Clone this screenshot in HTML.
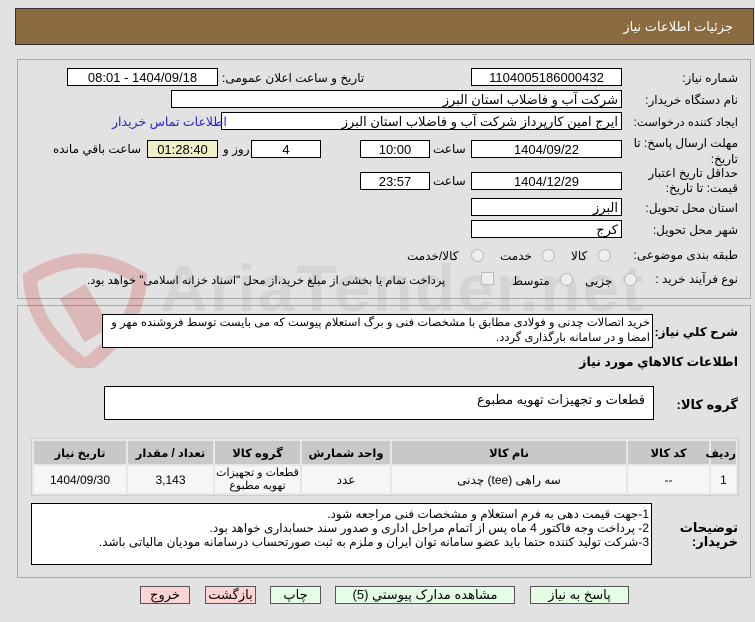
<!DOCTYPE html>
<html><head><meta charset="utf-8"><style>
body{margin:0;width:755px;height:622px;background:#e2e2e2;font-family:"Liberation Sans","DejaVu Sans",sans-serif;font-size:12px;color:#000;position:relative;overflow:hidden}
.a{position:absolute}
.hdr{left:15px;top:8px;width:737px;height:35px;background:#8b6b40;border:1px solid #333}
.hdr span{position:absolute;right:20px;top:10px;color:#fff;font-size:13px}
.pan{left:17px;width:732px;border:1px solid #aaa}
.box{position:absolute;background:#fff;border:1px solid #000;box-sizing:border-box;direction:rtl;padding:2px 3px;font-size:13px;white-space:nowrap;overflow:hidden}
.c{text-align:center}
.l{position:absolute;direction:rtl;white-space:nowrap;font-size:12px}
.rad{position:absolute;width:11px;height:11px;border-radius:50%;border:1px solid #bbb;background:#eee}
table{border-collapse:separate;border-spacing:2px;position:absolute;left:31px;top:438px;width:708px;background:#e6e6e6;border:1px solid #ccc;table-layout:fixed}
th{background:#c8c8c8;height:23px;font-size:11.5px;padding:0}
td{background:#f6f6f6;height:27px;text-align:center;font-size:12px;padding:0}
.btn{position:absolute;top:586px;height:18px;border:1px solid #555;box-sizing:border-box;text-align:center;font-size:13px;line-height:16px}
.g{background:#e4fde4}.p{background:#fdd4d4}
</style></head><body>
<div class="a hdr"><span>جزئیات اطلاعات نیاز</span></div>
<div class="a pan" style="top:59px;height:238px"></div>
<div class="a pan" style="top:305px;height:271px"></div>
<svg class="a" style="left:20px;top:248px;opacity:.18" width="130" height="120" viewBox="0 0 130 120"><path d="M10 30 Q65 -5 120 30 Q118 80 65 118 Q12 80 10 30Z" fill="none" stroke="#c00" stroke-width="14"/><rect x="50" y="40" width="30" height="50" fill="#c00" transform="rotate(-30 65 65)"/></svg>
<div class="a" style="left:160px;top:250px;font-size:66px;font-weight:bold;color:#999;opacity:.18;letter-spacing:2px">AriaTender.net</div>

<div class="l" style="right:17px;top:71px">شماره نیاز:</div>
<div class="box c" style="left:471px;top:68px;width:151px;height:18px;padding:1px">1104005186000432</div>
<div class="l" style="left:222px;top:71px">تاریخ و ساعت اعلان عمومی:</div>
<div class="box c" style="left:67px;top:68px;width:151px;height:18px;padding:1px">1404/09/18 - 08:01</div>
<div class="l" style="right:17px;top:93px">نام دستگاه خریدار:</div>
<div class="box" style="left:171px;top:90px;width:451px;height:18px;padding:1px 3px">شرکت آب و فاضلاب استان البرز</div>
<div class="l" style="right:17px;top:115px;font-size:11.5px">ایجاد کننده درخواست:</div>
<div class="box" style="left:221px;top:112px;width:401px;height:18px;padding:1px 3px">ایرج امین کارپرداز شرکت آب و فاضلاب استان البرز</div>
<div class="l" style="left:112px;top:114px;color:#2222dd;font-size:12.5px">اطلاعات تماس خریدار</div>
<div class="l" style="right:17px;top:135px;line-height:16px;text-align:right">مهلت ارسال پاسخ: تا<br>تاریخ:</div>
<div class="box c" style="left:471px;top:140px;width:151px;height:18px;padding:1px">1404/09/22</div>
<div class="l" style="left:433px;top:142px">ساعت</div>
<div class="box c" style="left:360px;top:140px;width:70px;height:18px;padding:1px">10:00</div>
<div class="box c" style="left:251px;top:140px;width:70px;height:18px;padding:1px">4</div>
<div class="l" style="left:223px;top:142px">روز و</div>
<div class="box c" style="left:147px;top:140px;width:71px;height:18px;padding:1px;background:#f0f0c8">01:28:40</div>
<div class="l" style="left:53px;top:142px">ساعت باقي مانده</div>
<div class="l" style="right:17px;top:166px;line-height:15px;text-align:right">حداقل تاریخ اعتبار<br>قیمت: تا تاریخ:</div>
<div class="box c" style="left:471px;top:172px;width:151px;height:18px;padding:1px">1404/12/29</div>
<div class="l" style="left:433px;top:174px">ساعت</div>
<div class="box c" style="left:360px;top:172px;width:70px;height:18px;padding:1px">23:57</div>
<div class="l" style="right:17px;top:201px">استان محل تحویل:</div>
<div class="box" style="left:471px;top:198px;width:151px;height:18px;padding:1px 3px">البرز</div>
<div class="l" style="right:17px;top:223px">شهر محل تحویل:</div>
<div class="box" style="left:471px;top:220px;width:151px;height:18px;padding:1px 3px">کرج</div>
<div class="l" style="right:17px;top:248px">طبقه بندی موضوعی:</div>
<div class="rad" style="left:598px;top:249px"></div><div class="l" style="left:571px;top:249px">کالا</div>
<div class="rad" style="left:542px;top:249px"></div><div class="l" style="left:500px;top:249px">خدمت</div>
<div class="rad" style="left:471px;top:249px"></div><div class="l" style="left:407px;top:249px">کالا/خدمت</div>
<div class="l" style="right:17px;top:272px">نوع فرآیند خرید :</div>
<div class="rad" style="left:624px;top:273px"></div><div class="l" style="left:585px;top:274px">جزیی</div>
<div class="rad" style="left:560px;top:273px"></div><div class="l" style="left:512px;top:274px">متوسط</div>
<div class="a" style="left:481px;top:272px;width:11px;height:11px;border:1px solid #bbb;background:#eee"></div>
<div class="l" style="left:87px;top:273px;font-size:11.5px">پرداخت تمام یا بخشی از مبلغ خرید،از محل "اسناد خزانه اسلامی" خواهد بود.</div>

<div class="l" style="right:17px;top:325px;font-weight:bold;font-size:12px">شرح کلي نياز:</div>
<div class="box" style="left:102px;top:314px;width:551px;height:34px;white-space:normal;line-height:15px;padding:1px 2px;font-size:11.5px;letter-spacing:-0.2px">خرید اتصالات چدنی و فولادی مطابق با مشخصات فنی و برگ استعلام پیوست که می بایست توسط فروشنده مهر و امضا و در سامانه بارگذاری گردد.</div>
<div class="l" style="right:17px;top:354px;font-weight:bold;font-size:12.5px">اطلاعات کالاهاي مورد نياز</div>
<div class="l" style="right:17px;top:397px;font-weight:bold;font-size:13px">گروه کالا:</div>
<div class="box" style="left:104px;top:386px;width:550px;height:34px;padding:5px 8px">قطعات و تجهیزات تهویه مطبوع</div>
<table dir="rtl">
<colgroup><col style="width:25px"><col style="width:81px"><col style="width:234px"><col style="width:88px"><col style="width:85px"><col style="width:85px"><col></colgroup>
<tr><th>ردیف</th><th>کد کالا</th><th>نام کالا</th><th>واحد شمارش</th><th>گروه کالا</th><th>تعداد / مقدار</th><th>تاریخ نیاز</th></tr>
<tr><td>1</td><td>--</td><td>سه راهی (tee) چدنی</td><td>عدد</td><td style="line-height:13px;font-size:11px">قطعات و تجهیزات<br>تهویه مطبوع</td><td>3,143</td><td>1404/09/30</td></tr>
</table>
<div class="l" style="right:17px;top:521px;font-weight:bold;font-size:13px;line-height:14px;text-align:right">توضیحات<br>خریدار:</div>
<div class="box" style="left:31px;top:503px;width:621px;height:62px;white-space:normal;line-height:14px;padding:3px 2px;font-size:12px">1-جهت قیمت دهی به فرم استعلام و مشخصات فنی مراجعه شود.<br>2- پرداخت وجه فاکتور 4 ماه پس از اتمام مراحل اداری و صدور سند حسابداری خواهد بود.<br>3-شرکت تولید کننده حتما باید عضو سامانه توان ایران و ملزم به ثبت صورتحساب درسامانه مودیان مالیاتی باشد.</div>

<div class="btn p" style="left:140px;width:50px">خروج</div>
<div class="btn p" style="left:205px;width:51px">بازگشت</div>
<div class="btn g" style="left:270px;width:51px">چاپ</div>
<div class="btn g" style="left:335px;width:180px">مشاهده مدارک پیوستي (5)</div>
<div class="btn g" style="left:530px;width:99px">پاسخ به نیاز</div>
</body></html>
